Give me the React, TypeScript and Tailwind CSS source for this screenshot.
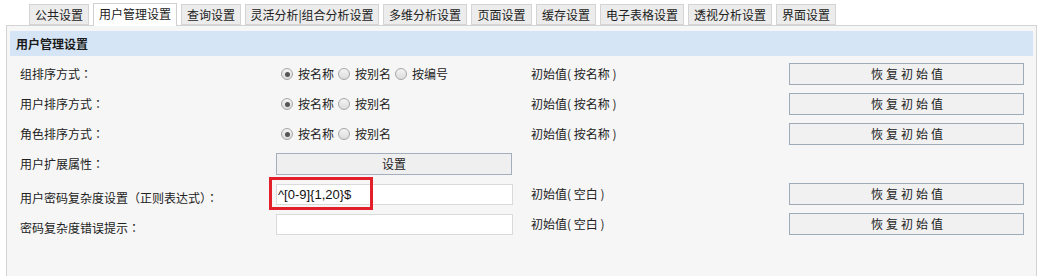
const tabs = [
  { label: '公共设置', w: 'w-[60px]' },
  { label: '用户管理设置', w: 'w-[84px]', active: true },
  { label: '查询设置', w: 'w-[60px]' },
  { label: '灵活分析|组合分析设置', w: 'w-[134px]' },
  { label: '多维分析设置', w: 'w-[84px]' },
  { label: '页面设置', w: 'w-[61px]' },
  { label: '缓存设置', w: 'w-[60px]' },
  { label: '电子表格设置', w: 'w-[84px]' },
  { label: '透视分析设置', w: 'w-[84px]' },
  { label: '界面设置', w: 'w-[60px]' },
];

// full-width punctuation sits centred in its box in the reference
const P = ({ children }: { children: string }) => (
  <span style={{ fontFamily: '"Noto Sans CJK TC", "Noto Sans CJK SC", sans-serif' }}>{children}</span>
);

const Radio = ({ checked, label }: { checked?: boolean; label: string }) => (
  <span className="flex items-center">
    <span className="w-[12px] h-[12px] rounded-full border border-[#a6a6a6] bg-gradient-to-b from-[#f4f4f4] to-[#dcdcdc] flex items-center justify-center mr-[5px]">
      {checked && <span className="w-[5px] h-[5px] rounded-full bg-[#555]" />}
    </span>
    <span>{label}</span>
  </span>
);

const RestoreButton = () => (
  <button className="w-[235px] h-[22px] border border-[#9eabb9] bg-[#f1f1f1] text-[12px] tracking-[3px] pl-[4px] text-[#222] flex items-center justify-center">
    恢复初始值
  </button>
);

const Row = ({
  label,
  control,
  init,
  restore = true,
  labelClass = '',
}: {
  label: React.ReactNode;
  control: React.ReactNode;
  init?: string;
  restore?: boolean;
  labelClass?: string;
}) => (
  <div className="flex items-center h-[30px]">
    <div className={`w-[266px] pl-[10px] ${labelClass}`}>{label}</div>
    <div className="w-[237px] flex items-center">{control}</div>
    <div className="w-[276px] pl-[18px]">{init}</div>
    <div className="w-[235px]">{restore && <RestoreButton />}</div>
  </div>
);

export default function App() {
  return (
    <div
      className="w-[1043px] h-[276px] bg-white overflow-hidden text-[12px] text-[#222]"
      style={{ fontFamily: '"Noto Sans CJK SC", "Liberation Sans", sans-serif' }}
    >
      {/* tabs */}
      <div className="flex items-end gap-[4px] pl-[29px] h-[26px] pt-[3px]">
        {tabs.map((t) =>
          t.active ? (
            <div
              key={t.label}
              className={`${t.w} h-[23px] relative z-10 bg-white border border-b-0 border-[#d0d0d0] flex items-center justify-center pb-[2px]`}
            >
              {t.label}
            </div>
          ) : (
            <div
              key={t.label}
              className={`${t.w} h-[21px] mb-[1px] bg-[#ececec] border border-[#d4d4d4] flex items-center justify-center`}
            >
              {t.label}
            </div>
          )
        )}
      </div>

      {/* panel */}
      <div className="-mt-[1px] ml-[6px] w-[1031px] h-[260px] border border-[#d3d3d3] bg-[#f6f6f6] px-[3px] pt-[5px]">
        <div className="h-[25px] bg-[#d5e5f5] flex items-center pl-[6px] font-bold text-[#1a1a1a]">
          用户管理设置
        </div>

        <div className="mt-[3px]">
          <Row
            label={<>组排序方式<P>：</P></>}
            control={
              <div className="flex items-center gap-[4px] pl-[5px]">
                <Radio checked label="按名称" />
                <Radio label="按别名" />
                <Radio label="按编号" />
              </div>
            }
            init="初始值( 按名称 )"
          />
          <Row
            label={<>用户排序方式<P>：</P></>}
            control={
              <div className="flex items-center gap-[4px] pl-[5px]">
                <Radio checked label="按名称" />
                <Radio label="按别名" />
              </div>
            }
            init="初始值( 按名称 )"
          />
          <Row
            label={<>角色排序方式<P>：</P></>}
            control={
              <div className="flex items-center gap-[4px] pl-[5px]">
                <Radio checked label="按名称" />
                <Radio label="按别名" />
              </div>
            }
            init="初始值( 按名称 )"
          />
          <Row
            label={<>用户扩展属性<P>：</P></>}
            control={
              <button className="w-[236px] h-[22px] border border-[#a3afbd] bg-[#efefef] text-[12px] text-[#222] flex items-center justify-center">
                设置
              </button>
            }
            restore={false}
          />
          <Row
            label={<>用户密码复杂度设置<P>（</P>正则表达式<P>）：</P></>}
            labelClass="mt-[8px]"
            control={
              <div className="relative">
                <input
                  readOnly
                  value="^[0-9]{1,20}$"
                  className="w-[237px] h-[21px] border border-[#dadada] bg-white px-[1px] text-[13px] text-[#111] outline-none"
                  style={{ fontFamily: '"Liberation Sans", Arial, sans-serif' }}
                />
                {/* annotation */}
                <div className="absolute left-[-7px] top-[-7px] w-[104px] h-[33px] border-[3px] border-[#e3202a] pointer-events-none" />
              </div>
            }
            init="初始值( 空白 )"
          />
          <Row
            label={<>密码复杂度错误提示<P>：</P></>}
            labelClass="mt-[8px]"
            control={
              <input
                readOnly
                className="w-[237px] h-[21px] border border-[#dadada] bg-white outline-none"
              />
            }
            init="初始值( 空白 )"
          />
        </div>
      </div>
    </div>
  );
}
